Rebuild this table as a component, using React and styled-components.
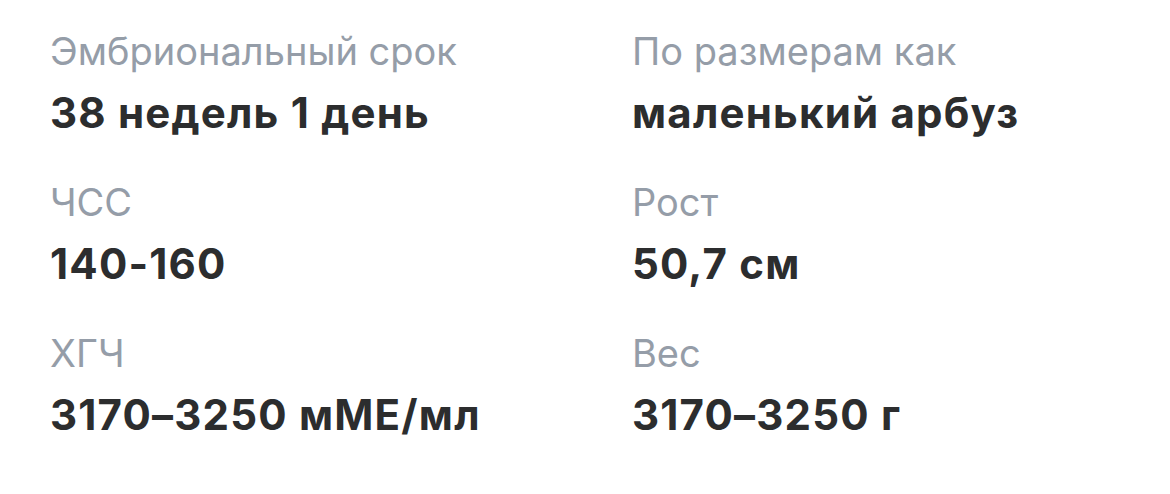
import styled, { createGlobalStyle } from "styled-components"

const GlobalStyle = createGlobalStyle`
    * { box-sizing: border-box; }
    body {
        margin: 0;
        background: #FFFFFF;
        font-family: "Inter", "Noto Sans", sans-serif;
    }
`

const StyledGrid = styled.section`
    display: grid;
    grid-template-columns: 582px 1fr;
    align-content: start;
    row-gap: 43px;
    padding: 28px 50px 0;
    width: 1170px;
    height: 494px;
`
const StyledItem = styled.div`
    display: flex;
    flex-direction: column;
    gap: 16px;
`
const StyledLabel = styled.span`
    font-size: 38px;
    line-height: 46px;
    font-weight: 400;
    color: #959DA8;
`
const StyledValue = styled.span`
    font-size: 42px;
    line-height: 46px;
    font-weight: 700;
    letter-spacing: 1.2px;
    color: #2C2D2E;
`

const dados = [
    { label: "Эмбриональный срок", value: "38 недель 1 день" },
    { label: "По размерам как", value: "маленький арбуз" },
    { label: "ЧСС", value: "140-160" },
    { label: "Рост", value: "50,7 см" },
    { label: "ХГЧ", value: "3170–3250 мМЕ/мл" },
    { label: "Вес", value: "3170–3250 г" },
]

const App = () => {
    return (
        <>
            <GlobalStyle />
            <StyledGrid>
                {dados.map((item) => (
                    <StyledItem key={item.label}>
                        <StyledLabel>{item.label}</StyledLabel>
                        <StyledValue>{item.value}</StyledValue>
                    </StyledItem>
                ))}
            </StyledGrid>
        </>
    )
}

export default App
